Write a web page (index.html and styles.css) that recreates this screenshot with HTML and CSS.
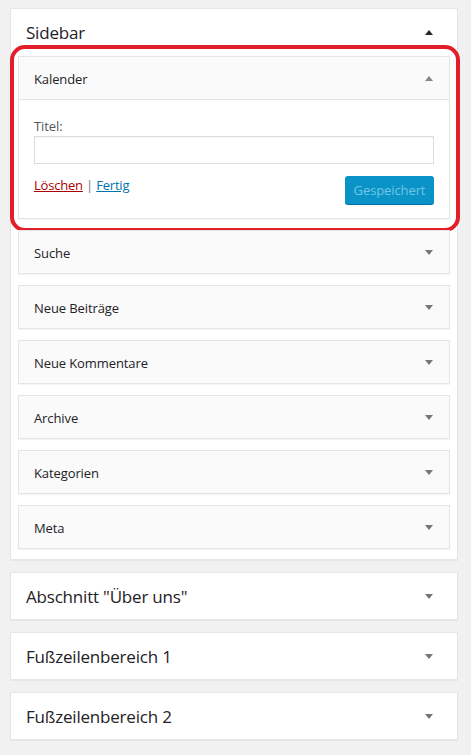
FILE: index.html
```html
<!DOCTYPE html>
<html lang="de">
<head>
<meta charset="utf-8">
<title>Widgets</title>
<link rel="stylesheet" href="styles.css">
</head>
<body>
<div class="sections">
  <section class="panel">
    <div class="panel-head">
      <h2 class="panel-title">Sidebar</h2>
      <span class="tri tri-up tri-dark"></span>
    </div>
    <div class="widgets">
      <div class="widget open">
        <div class="widget-head">
          <h3 class="widget-title">Kalender</h3>
          <span class="tri tri-up tri-light"></span>
        </div>
        <div class="widget-body">
          <label class="field-label" for="titel">Titel:</label>
          <input class="field" id="titel" type="text">
          <div class="actions">
            <div class="links"><a class="del" href="#">Löschen</a> <span class="sep">|</span> <a class="done" href="#">Fertig</a></div>
            <button class="save" type="button">Gespeichert</button>
          </div>
        </div>
        <div class="highlight"></div>
      </div>
      <div class="widget"><div class="widget-head"><h3 class="widget-title">Suche</h3><span class="tri tri-down"></span></div></div>
      <div class="widget"><div class="widget-head"><h3 class="widget-title">Neue Beiträge</h3><span class="tri tri-down"></span></div></div>
      <div class="widget"><div class="widget-head"><h3 class="widget-title">Neue Kommentare</h3><span class="tri tri-down"></span></div></div>
      <div class="widget"><div class="widget-head"><h3 class="widget-title">Archive</h3><span class="tri tri-down"></span></div></div>
      <div class="widget"><div class="widget-head"><h3 class="widget-title">Kategorien</h3><span class="tri tri-down"></span></div></div>
      <div class="widget"><div class="widget-head"><h3 class="widget-title">Meta</h3><span class="tri tri-down"></span></div></div>
    </div>
  </section>
  <section class="panel">
    <div class="panel-head"><h2 class="panel-title">Abschnitt "Über uns"</h2><span class="tri tri-down"></span></div>
  </section>
  <section class="panel">
    <div class="panel-head"><h2 class="panel-title">Fußzeilenbereich 1</h2><span class="tri tri-down"></span></div>
  </section>
  <section class="panel">
    <div class="panel-head"><h2 class="panel-title">Fußzeilenbereich 2</h2><span class="tri tri-down"></span></div>
  </section>
</div>
</body>
</html>
```

FILE: styles.css
```css
* { box-sizing: border-box; }
html, body { margin: 0; padding: 0; }
body {
  background: #f1f1f1;
  font-family: "Open Sans", "Noto Sans", sans-serif;
  color: #1e2226;
  width: 471px;
  height: 755px;
  overflow: hidden;
}
.sections {
  display: flex;
  flex-direction: column;
  gap: 12px;
  padding: 8px 0 0 10px;
  width: 458px;
}
.panel {
  background: #fff;
  border: 1px solid #e6e6e6;
  box-shadow: 0 1px 1px rgba(0,0,0,0.04);
}
.panel-head {
  height: 46px;
  display: flex;
  align-items: center;
  justify-content: space-between;
  padding: 0 24px 0 15px;
}
.panel-title {
  margin: 0;
  font-size: 17px;
  font-weight: 400;
  letter-spacing: -0.2px;
  color: #1e2226;
}
.widgets {
  display: flex;
  flex-direction: column;
  gap: 11px;
  padding: 1px 7px 10px 7px;
}
.widget {
  position: relative;
  border: 1px solid #e5e5e5;
  background: #fafafa;
  box-shadow: 0 1px 1px rgba(0,0,0,0.04);
}
.widget-head {
  height: 42px;
  display: flex;
  align-items: center;
  justify-content: space-between;
  padding: 1px 16px 0 15px;
}
.widget-title {
  margin: 0;
  font-size: 13px;
  font-weight: 400;
  letter-spacing: -0.1px;
  color: #1e2226;
}
.open .widget-head { border-bottom: 1px solid #e5e5e5; height: 43px; }
.widget-body {
  background: #fff;
  padding: 17px 15px 14px 15px;
  display: flex;
  flex-direction: column;
}
.field-label {
  font-size: 13px;
  color: #50565c;
  line-height: 18px;
  letter-spacing: -0.1px;
}
.field {
  margin-top: 1px;
  height: 28px;
  width: 100%;
  border: 1px solid #dddddd;
  box-shadow: inset 0 1px 2px rgba(0,0,0,0.04);
  background: #fff;
  font: inherit;
}
.actions {
  display: flex;
  justify-content: space-between;
  align-items: flex-start;
  margin-top: 12px;
}
.links {
  font-size: 13px;
  line-height: 18px;
  padding-top: 0;
  letter-spacing: -0.2px;
  color: #72777c;
}
.del { color: #a00; }
.done { color: #0073aa; }
.sep { color: #72777c; }
.save {
  width: 89px;
  height: 28px;
  border: 0;
  border-radius: 3px;
  background: #0a93c7;
  box-shadow: 0 1px 0 #0073aa;
  color: #70c6e6;
  font: inherit;
  font-size: 13px;
  letter-spacing: -0.1px;
  padding: 0;
}
.tri {
  width: 0;
  height: 0;
  border-left: 4px solid transparent;
  border-right: 4px solid transparent;
}
.tri-up { border-bottom: 5px solid #23282d; }
.tri-up.tri-light { border-bottom-color: #82878c; }
.tri-down { border-top: 5px solid #72777c; }
.highlight {
  position: absolute;
  top: -12px;
  left: -9px;
  right: -11px;
  bottom: -14px;
  border: 4px solid #e31e2a;
  border-radius: 15px;
  pointer-events: none;
}
```
